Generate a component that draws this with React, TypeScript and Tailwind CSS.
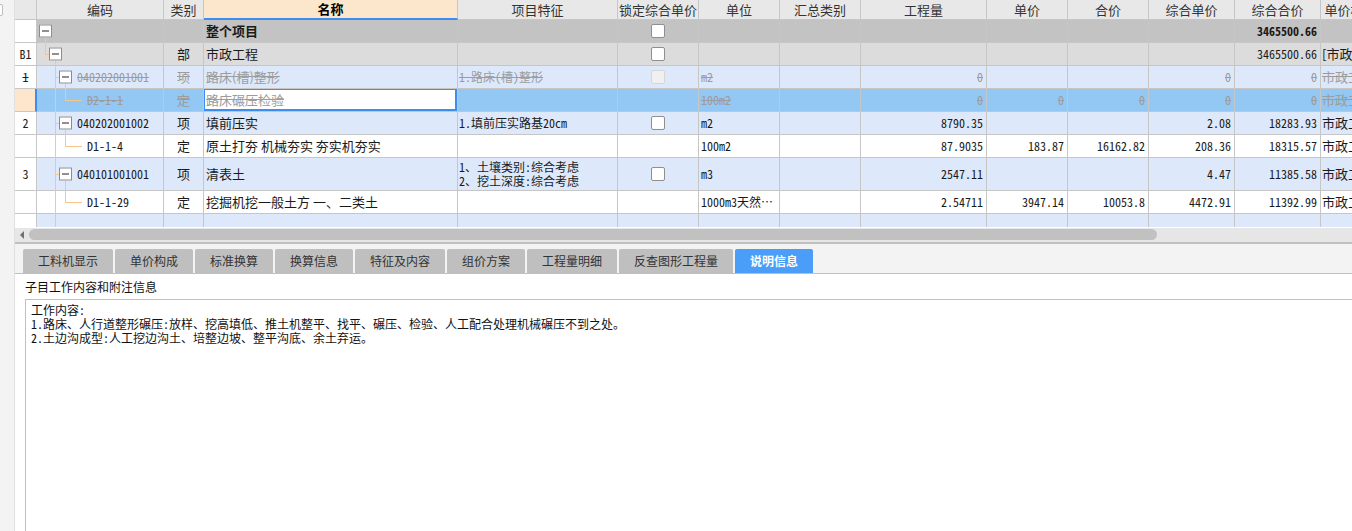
import clsx from "clsx";

const MONO = "font-['Noto_Sans_Mono_CJK_SC','Liberation_Mono','Noto_Sans_CJK_SC',monospace]";
const SANS = "font-['Noto_Sans_CJK_SC','Noto_Sans',sans-serif]";
const GRID =
  "grid grid-cols-[22px_127px_40px_254px_160px_81px_81px_81px_126px_81px_81px_86px_86px_86px]";
const LINE = "border-r border-b border-[#c6c6c6]";

type Tree = "root" | "b1" | "item" | "itemOpen" | "child" | "empty";

interface Row {
  num: string;
  tree: Tree;
  code: string;
  kind: string;
  name: string;
  feature: string[];
  lock: "on" | "dis" | "";
  unit: string;
  qty: string;
  price: string;
  total: string;
  cprice: string;
  ctotal: string;
  extra: string;
  bg: string;
  h: string;
  strike?: boolean;
  selected?: boolean;
  bold?: boolean;
}

const rows: Row[] = [
  { num: "", tree: "root", code: "", kind: "", name: "整个项目", feature: [], lock: "on", unit: "", qty: "", price: "", total: "", cprice: "", ctotal: "3465500.66", extra: "", bg: "bg-[#c3c3c3]", h: "h-[23px]", bold: true },
  { num: "B1", tree: "b1", code: "", kind: "部", name: "市政工程", feature: [], lock: "on", unit: "", qty: "", price: "", total: "", cprice: "", ctotal: "3465500.66", extra: "[市政工程]", bg: "bg-[#dcdcdc]", h: "h-[23px]" },
  { num: "1", tree: "itemOpen", code: "040202001001", kind: "项", name: "路床(槽)整形", feature: ["1.路床(槽)整形"], lock: "dis", unit: "m2", qty: "0", price: "", total: "", cprice: "0", ctotal: "0", extra: "市政工程", bg: "bg-[#dde9fb]", h: "h-[23px]", strike: true },
  { num: "", tree: "child", code: "D2-1-1", kind: "定", name: "路床碾压检验", feature: [], lock: "", unit: "100m2", qty: "0", price: "0", total: "0", cprice: "0", ctotal: "0", extra: "市政工程", bg: "bg-[#93c7f4]", h: "h-[23px]", strike: true, selected: true },
  { num: "2", tree: "itemOpen", code: "040202001002", kind: "项", name: "填前压实", feature: ["1.填前压实路基20cm"], lock: "on", unit: "m2", qty: "8790.35", price: "", total: "", cprice: "2.08", ctotal: "18283.93", extra: "市政工程", bg: "bg-[#dde9fb]", h: "h-[23px]" },
  { num: "", tree: "child", code: "D1-1-4", kind: "定", name: "原土打夯 机械夯实 夯实机夯实", feature: [], lock: "", unit: "100m2", qty: "87.9035", price: "183.87", total: "16162.82", cprice: "208.36", ctotal: "18315.57", extra: "市政工程", bg: "bg-white", h: "h-[23px]" },
  { num: "3", tree: "itemOpen", code: "040101001001", kind: "项", name: "清表土", feature: ["1、土壤类别:综合考虑", "2、挖土深度:综合考虑"], lock: "on", unit: "m3", qty: "2547.11", price: "", total: "", cprice: "4.47", ctotal: "11385.58", extra: "市政工程", bg: "bg-[#dde9fb]", h: "h-[33px]" },
  { num: "", tree: "child", code: "D1-1-29", kind: "定", name: "挖掘机挖一般土方 一、二类土", feature: [], lock: "", unit: "1000m3天然…", qty: "2.54711", price: "3947.14", total: "10053.8", cprice: "4472.91", ctotal: "11392.99", extra: "市政工程", bg: "bg-white", h: "h-[23px]" },
  { num: "", tree: "empty", code: "", kind: "", name: "", feature: [], lock: "", unit: "", qty: "", price: "", total: "", cprice: "", ctotal: "", extra: "", bg: "bg-[#dde9fb]", h: "h-[23px]" },
];

const headers = ["", "编码", "类别", "名称", "项目特征", "锁定综合单价", "单位", "汇总类别", "工程量", "单价", "合价", "综合单价", "综合合价", "单价构成文件"];

const tabs = [
  { label: "工料机显示", w: "w-[90px]" },
  { label: "单价构成", w: "w-[78px]" },
  { label: "标准换算", w: "w-[78px]" },
  { label: "换算信息", w: "w-[78px]" },
  { label: "特征及内容", w: "w-[90px]" },
  { label: "组价方案", w: "w-[78px]" },
  { label: "工程量明细", w: "w-[90px]" },
  { label: "反查图形工程量", w: "w-[114px]" },
  { label: "说明信息", w: "w-[78px]", active: true },
];

function Box({ left }: { left: string }) {
  return (
    <span
      className={clsx(
        "absolute top-1/2 -translate-y-1/2 w-[13px] h-[13px] border border-[#8c8c8c] bg-white flex items-center justify-center",
        left
      )}
    >
      <span className="w-[7px] h-px bg-[#222]" />
    </span>
  );
}

function CodeCell({ r }: { r: Row }) {
  const ln = "absolute bg-[#f8c68b]";
  return (
    <div className={clsx("relative", LINE, r.bg)}>
      {r.tree === "root" && (
        <>
          <span className={clsx(ln, "left-[8px] top-[calc(50%+6px)] -bottom-px w-px")} />
          <Box left="left-[2px]" />
        </>
      )}
      {r.tree === "b1" && (
        <>
          <span className={clsx(ln, "left-[8px] -top-px h-[calc(50%+1px)] w-px")} />
          <span className={clsx(ln, "left-[8px] top-1/2 w-[4px] h-px")} />
          <span className={clsx(ln, "left-[18px] top-[calc(50%+6px)] -bottom-px w-px")} />
          <Box left="left-[12px]" />
        </>
      )}
      {(r.tree === "item" || r.tree === "itemOpen" || r.tree === "child" || r.tree === "empty") && (
        <span className={clsx(ln, "left-[18px] -top-px -bottom-px w-px")} />
      )}
      {(r.tree === "item" || r.tree === "itemOpen") && (
        <>
          <span className={clsx(ln, "left-[18px] top-1/2 w-[4px] h-px")} />
          {r.tree === "itemOpen" && (
            <span className={clsx(ln, "left-[28px] top-[calc(50%+6px)] -bottom-px w-px")} />
          )}
          <Box left="left-[22px]" />
        </>
      )}
      {r.tree === "child" && (
        <>
          <span className={clsx(ln, "left-[28px] -top-px h-[calc(50%+1px)] w-px")} />
          <span className={clsx(ln, "left-[28px] top-1/2 w-[17px] h-px")} />
        </>
      )}
      {r.code && (
        <span
          className={clsx(
            "absolute top-1/2 -translate-y-1/2 text-[12px] leading-none whitespace-nowrap",
            MONO,
            r.tree === "child" ? "left-[50px]" : "left-[40px]",
            r.strike ? "text-[#9c9c9c] line-through" : "text-[#1a1a1a]"
          )}
        >
          {r.code}
        </span>
      )}
    </div>
  );
}

function Check({ dis }: { dis?: boolean }) {
  return (
    <span
      className={clsx(
        "w-[14px] h-[14px] rounded-[2px] border",
        dis ? "border-[#d6d6d6] bg-[#f0f0f0]" : "border-[#8f8f8f] bg-white"
      )}
    />
  );
}

function DataRow({ r }: { r: Row }) {
  const txt = r.strike ? "text-[#9c9c9c] line-through" : "text-[#1a1a1a]";
  const num = (v: string) => (
    <div className={clsx(LINE, r.bg, "flex items-center justify-end pr-[3px] text-[12px]", MONO, txt, r.bold && "font-bold")}>
      {v}
    </div>
  );
  return (
    <>
      <div
        className={clsx(
          "border-b border-[#c6c6c6] flex items-center justify-center text-[12px] text-[#222]",
          MONO,
          r.h,
          r.selected ? "bg-[#fde6cb] border-r-2 border-r-[#3d8ef0]" : "bg-white border-r",
          r.strike && !r.selected && "line-through"
        )}
      >
        {r.num}
      </div>
      <CodeCell r={r} />
      <div className={clsx(LINE, r.bg, "flex items-center justify-center text-[13px]", SANS, txt)}>{r.kind}</div>
      <div
        className={clsx(
          LINE,
          "relative flex items-center pl-[2px] whitespace-nowrap overflow-hidden",
          SANS,
          txt,
          r.selected ? "bg-white" : r.bg,
          r.bold ? "font-bold text-[13px]" : "text-[13px]"
        )}
      >
        {r.name}
        {r.selected && <span className="absolute -left-px -top-px right-0 bottom-0 border-2 border-[#3d8ef0]" />}
      </div>
      <div className={clsx(LINE, r.bg, "flex flex-col justify-center pl-[1px] text-[12px] leading-[14px] whitespace-nowrap", MONO, txt)}>
        {r.feature.map((f) => (
          <span key={f}>{f}</span>
        ))}
      </div>
      <div className={clsx(LINE, r.bg, "flex items-center justify-center")}>
        {r.lock === "on" && <Check />}
        {r.lock === "dis" && <Check dis />}
      </div>
      <div className={clsx(LINE, r.bg, "flex items-center pl-[2px] text-[12px] whitespace-nowrap", MONO, txt)}>{r.unit}</div>
      <div className={clsx(LINE, r.bg)} />
      {num(r.qty)}
      {num(r.price)}
      {num(r.total)}
      {num(r.cprice)}
      {num(r.ctotal)}
      <div className={clsx(LINE, r.bg, "flex items-center pl-[1px] text-[13px] whitespace-nowrap overflow-hidden", SANS, txt)}>
        {r.extra}
      </div>
    </>
  );
}

export default function App() {
  return (
    <div className={clsx("flex w-[1352px] h-[531px] overflow-hidden bg-[#f3f3f3]", SANS)}>
      {/* left strip */}
      <div className="relative w-[15px] shrink-0 border-r border-[#e0e0e0]">
        <span className="absolute -left-[2px] top-[4px] w-[5px] h-[12px] border border-[#bdbdbd] bg-white rounded-[2px]" />
      </div>

      <div className="flex-1 min-w-0 flex flex-col overflow-hidden">
        {/* grid */}
        <div className="h-[227px] overflow-hidden bg-white">
          <div className={clsx(GRID, "w-max")}>
            {headers.map((h, i) => (
              <div
                key={i}
                className={clsx(
                  "h-[20px] border-r flex items-center justify-center text-[13px] whitespace-nowrap overflow-hidden border-[#c6c6c6]",
                  i === 3
                    ? "bg-[#fde7cc] font-bold text-black border-b-2 border-b-[#3d8ef0]"
                    : "bg-[#e8e8e8] text-[#333] border-b"
                )}
              >
                {h}
              </div>
            ))}
            {rows.map((r, i) => (
              <div key={i} className="contents">
                <DataRow r={r} />
              </div>
            ))}
          </div>
        </div>

        {/* horizontal scrollbar */}
        <div className="relative h-[15px] bg-[#e6e6e6] border-t border-white shrink-0">
          <span className="absolute left-[5px] top-[3px] border-y-[4px] border-y-transparent border-r-[4px] border-r-[#707070]" />
          <span className="absolute left-[14px] top-[1px] w-[1128px] h-[11px] rounded-full bg-[#c1c1c1]" />
        </div>
        <div className="h-[2px] bg-[#c0c0c0] shrink-0" />

        {/* tabs */}
        <div className="h-[30px] shrink-0 flex items-end gap-[2px] pl-[8px] border-b border-[#c0c0c0]">
          {tabs.map((t) => (
            <div
              key={t.label}
              className={clsx(
                "h-[24px] rounded-t-[2px] flex items-center justify-center text-[12px]",
                t.w,
                t.active ? "bg-[#4a9ef8] text-white font-bold" : "bg-[#bfbfbf] text-[#333]"
              )}
            >
              {t.label}
            </div>
          ))}
        </div>

        {/* description panel */}
        <div className="flex-1 bg-white flex flex-col">
          <div className="h-[25px] pl-[10px] flex items-center text-[12px] text-[#111]">子目工作内容和附注信息</div>
          <div className={clsx("flex-1 ml-[10px] border-l border-t border-[#c0c0c0] pt-[3px] pl-[5px] text-[12px] leading-[14px] text-[#111]", MONO)}>
            <div>工作内容:</div>
            <div>1.路床、人行道整形碾压:放样、挖高填低、推土机整平、找平、碾压、检验、人工配合处理机械碾压不到之处。</div>
            <div>2.土边沟成型:人工挖边沟土、培整边坡、整平沟底、余土弃运。</div>
          </div>
        </div>
      </div>
    </div>
  );
}
